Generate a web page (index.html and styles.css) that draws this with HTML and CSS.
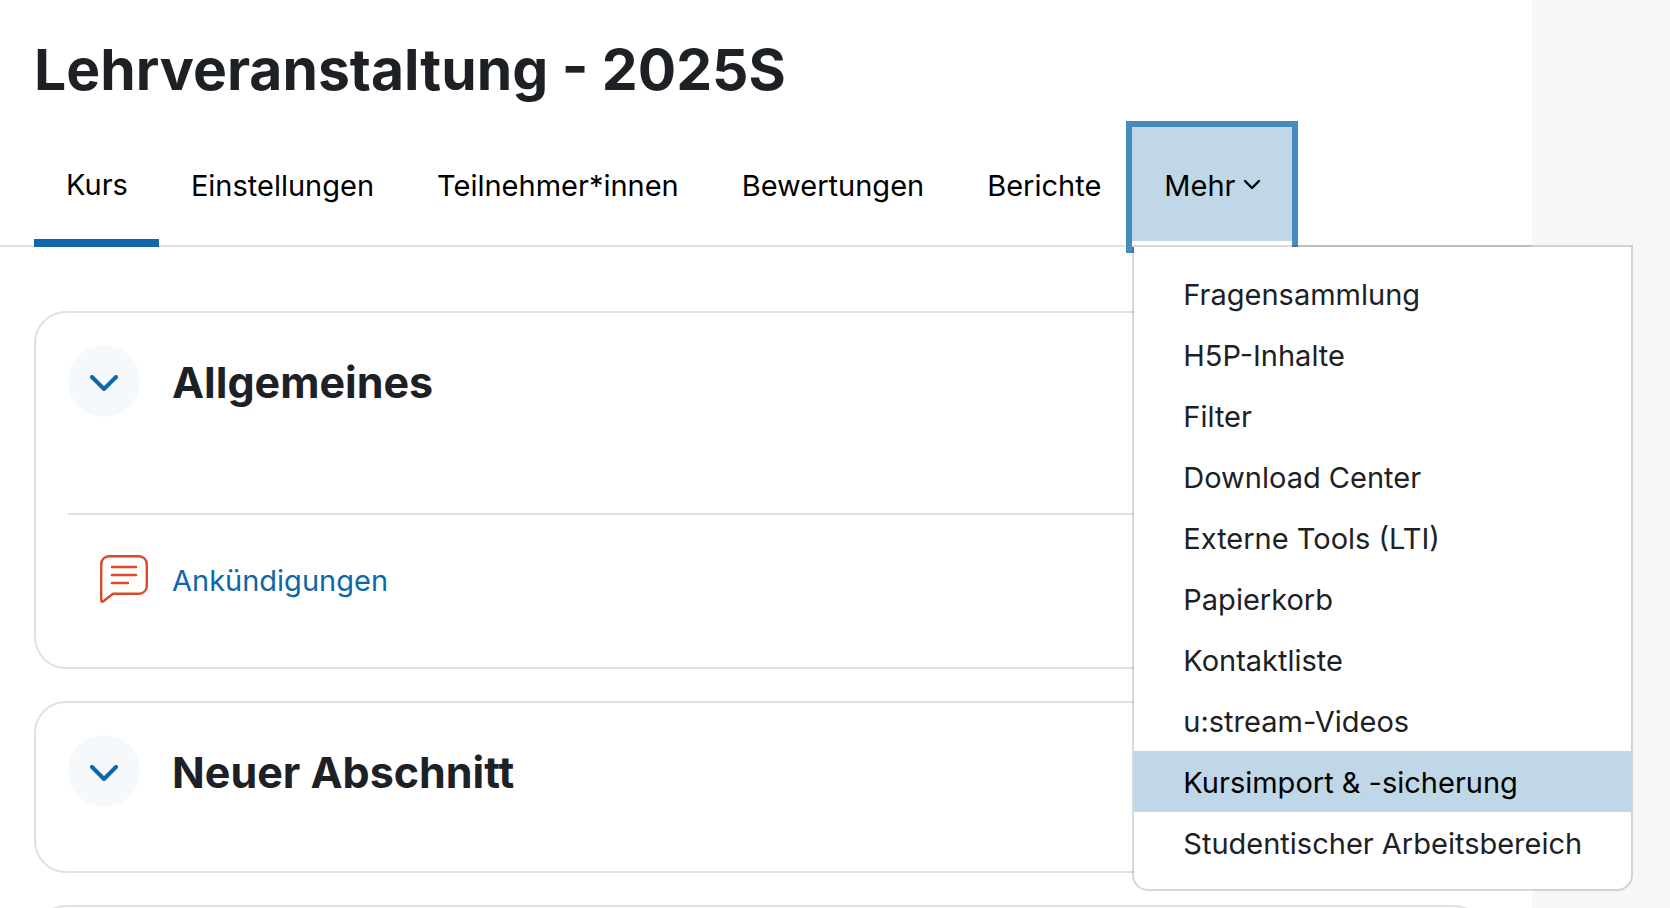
FILE: index.html
```
<!DOCTYPE html>
<html lang="de">
<head>
    <meta charset="UTF-8">
    <meta name="viewport" content="width=device-width, initial-scale=1.0">
    <title>Lehrveranstaltung - 2025S</title>
    <link rel="stylesheet" href="styles.css">
</head>
<body>
    <main class="page">
        <h1 class="page-title">Lehrveranstaltung - 2025S</h1>

        <nav class="tabs">
            <a class="tab active" href="#">Kurs</a>
            <a class="tab" href="#">Einstellungen</a>
            <a class="tab" href="#">Teilnehmer*innen</a>
            <a class="tab" href="#">Bewertungen</a>
            <a class="tab" href="#">Berichte</a>
            <div class="dropdown">
                <button class="tab more" type="button" aria-expanded="true">
                    Mehr
                    <svg class="caret" viewBox="0 0 18 12" aria-hidden="true"><path d="M2 2l7 7 7-7"/></svg>
                </button>
                <ul class="menu">
                    <li><a href="#">Fragensammlung</a></li>
                    <li><a href="#">H5P-Inhalte</a></li>
                    <li><a href="#">Filter</a></li>
                    <li><a href="#">Download Center</a></li>
                    <li><a href="#">Externe Tools (LTI)</a></li>
                    <li><a href="#">Papierkorb</a></li>
                    <li><a href="#">Kontaktliste</a></li>
                    <li><a href="#">u:stream-Videos</a></li>
                    <li><a class="current" href="#">Kursimport &amp; -sicherung</a></li>
                    <li><a href="#">Studentischer Arbeitsbereich</a></li>
                </ul>
            </div>
        </nav>

        <div class="sections">
            <section class="card">
                <div class="card-head">
                    <button class="toggle" type="button" aria-label="Allgemeines einklappen">
                        <svg viewBox="0 0 28 16" aria-hidden="true"><path d="M2 2l12 12L26 2"/></svg>
                    </button>
                    <h2>Allgemeines</h2>
                </div>
                <div class="activity">
                    <svg class="forum" viewBox="0 0 48 48" aria-hidden="true">
                        <path d="M9 1.200h30a7.800 7.800 0 0 1 7.800 7.800v22a7.800 7.800 0 0 1-7.800 7.800H13L3 46.500Q1.200 47.500 1.200 45V9a7.800 7.800 0 0 1 7.800-7.800z"/>
                        <path d="M12 12h24M12 20h24M12 28h16"/>
                    </svg>
                    <a href="#">Ankündigungen</a>
                </div>
            </section>

            <section class="card">
                <div class="card-head">
                    <button class="toggle" type="button" aria-label="Neuer Abschnitt einklappen">
                        <svg viewBox="0 0 28 16" aria-hidden="true"><path d="M2 2l12 12L26 2"/></svg>
                    </button>
                    <h2>Neuer Abschnitt</h2>
                </div>
            </section>

            <section class="card"></section>
        </div>
    </main>
</body>
</html>
```
FILE: styles.css
```
* { box-sizing: border-box; }

body {
    display: flex;
    height: 100vh;
    margin: 0;
    overflow: hidden;
    background: #f7f7f7;
    color: #1d2125;
    font-family: Inter, "Liberation Sans", sans-serif;
    font-size: 29px;
    line-height: 45px;
}

a { color: #0f66a8; text-decoration: none; }

.page {
    flex: 1;
    min-width: 0;
    margin-right: 138px;
    background: #fff;
}

.page-title {
    margin: 0;
    padding: 34px 34px 21px;
    font-size: 57px;
    line-height: 72px;
    font-weight: 700;
}

/* tabs */
.tabs {
    display: flex;
    height: 120px;
    padding: 0 34px;
    border-bottom: 2px solid #dee2e6;
}

.tab {
    display: flex;
    align-items: center;
    height: 120px;
    padding: 2px 31px 0 32px;
    border: 0;
    border-bottom: 6px solid transparent;
    background: none;
    color: #000;
    font: inherit;
    white-space: nowrap;
}

.tab.active { border-bottom: 8px solid #0f66a8; }

.dropdown { position: relative; }

.tab.more {
    gap: 8px;
    border-bottom-color: #fff;
    background: #c0d7e7;
    box-shadow: 0 0 0 6px #458bbb;
}

.caret { width: 18px; height: 12px; }

svg { fill: none; stroke: currentColor; stroke-linecap: round; stroke-linejoin: round; stroke-width: 2.4; }

.menu {
    position: absolute;
    top: 118px;
    left: 0;
    margin: 0;
    padding: 16px 0;
    border: 2px solid rgba(0, 0, 0, 0.15);
    border-radius: 0 0 16px 16px;
    background: #fff;
    background-clip: padding-box;
    list-style: none;
}

.menu a {
    display: block;
    padding: 9px 49px 7px;
    color: #1d2125;
    white-space: nowrap;
}

.menu a.current { background: #c0d7e7; color: #000; }

/* course sections */
.sections {
    display: flex;
    flex-direction: column;
    gap: 32px;
    padding: 64px 46px 64px 34px;
}

.card {
    min-height: 172px;
    padding: 32px;
    border: 2px solid #dee2e6;
    border-radius: 32px;
}

.card-head { display: flex; align-items: center; gap: 32px; }

.card-head h2 { margin: 0; padding-top: 2px; font-size: 43px; line-height: 70px; font-weight: 700; }

.toggle {
    display: flex;
    align-items: center;
    justify-content: center;
    width: 72px;
    height: 72px;
    padding: 4px 0 0;
    border: 0;
    border-radius: 50%;
    background: #f5f9fc;
    color: #0f66a8;
}

.toggle svg { width: 28px; height: 16px; stroke-width: 4; }

.activity {
    display: flex;
    align-items: center;
    gap: 24px;
    margin-top: 96px;
    padding: 40px 32px 32px;
    border-top: 2px solid #dee2e6;
}

.activity a { padding-top: 3px; }

.forum { width: 48px; height: 48px; color: #da4a26; }
```
